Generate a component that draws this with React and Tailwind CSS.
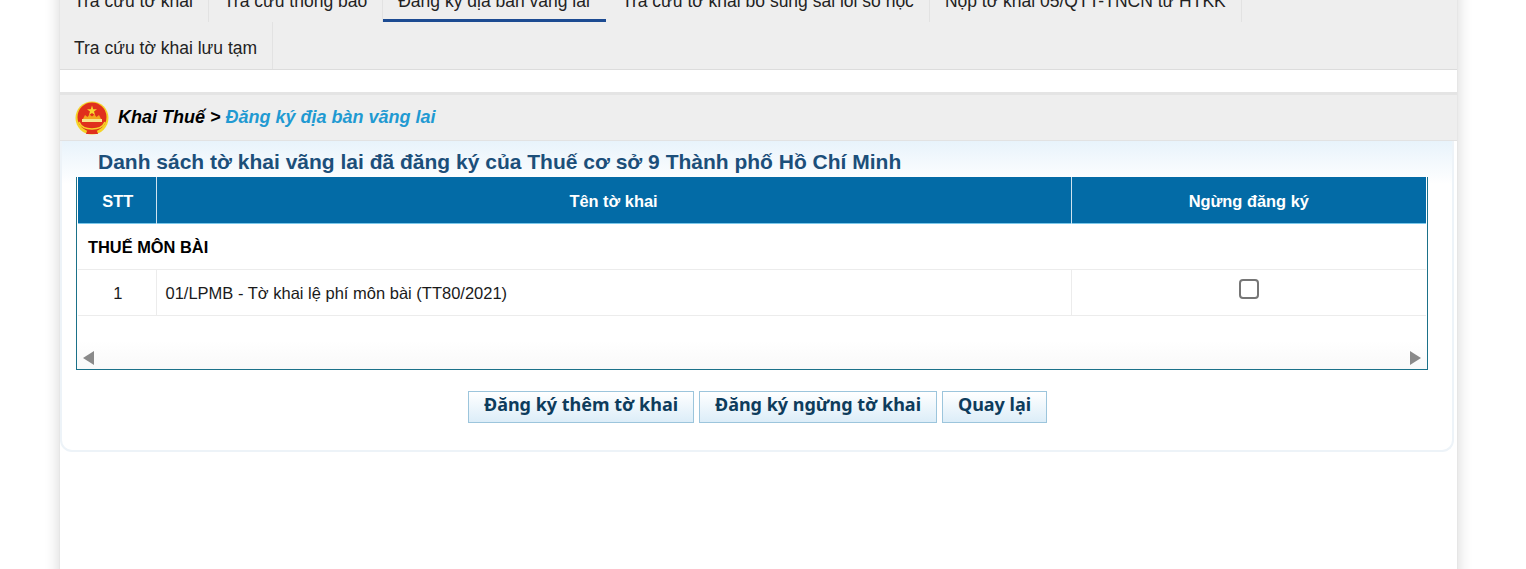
const arial = { fontFamily: '"Liberation Sans", Arial, sans-serif' };

function Emblem() {
  return (
    <svg width="34" height="34" viewBox="0 0 34 34" className="shrink-0">
      <circle cx="17" cy="17" r="16.5" fill="#f5d327" />
      <circle cx="17" cy="16" r="14.5" fill="#e0301c" />
      <polygon points="17,4.5 18.2,8.2 22,8.2 19,10.5 20.1,14.2 17,11.9 13.9,14.2 15,10.5 12,8.2 15.8,8.2" fill="#f7d62e" />
      <path d="M8 18l2-4 2.5 2 2-2.5 2.5 2 2.5-2 2 2.5 2.5-2 2 4z" fill="#f3a61e" />
      <rect x="7" y="18" width="20" height="3" fill="#f8e58a" />
      <path d="M11 33c1-4 3-7 6-7s5 3 6 7z" fill="#e0301c" />
      <path d="M4 21c2 5 7 7 13 7s11-2 13-7" stroke="#f5d327" strokeWidth="1.6" fill="none" />
    </svg>
  );
}

function Tab({ children, active }) {
  return (
    <div className={`relative h-[47px] flex items-center whitespace-nowrap text-[17.5px] text-[#222] ${active ? "pt-[9px] pl-[15px] pr-[16px] mr-[1px] border-b-[3px] border-[#1c4b92]" : "pt-[6px] px-[15px] border-r border-[#e2e2e2]"}`}>
      {children}
    </div>
  );
}

function Btn({ children, w }) {
  return (
    <button
      className={`${w} h-[32px] border border-[#9cc5dc] bg-gradient-to-b from-white to-[#dcedf8] text-[#0e3c5c] text-[18px] font-bold flex items-center justify-center pb-[5px]`}
      style={{ fontFamily: '"Noto Sans", sans-serif' }}
    >
      {children}
    </button>
  );
}

export default function App() {
  return (
    <div className="h-[569px] w-full overflow-hidden bg-white" style={arial}>
      <div className="ml-[59px] w-[1399px] h-[640px] -mt-[25px] bg-white shadow-[0_0_14px_rgba(0,0,0,0.16)] border-l border-r border-[#e6e6e6]">
        <div className="bg-[#eeeeee] border-b border-[#dcdcdc] h-[95px]">
          <div className="flex -ml-px">
            <Tab>Tra cứu tờ khai</Tab>
            <Tab>Tra cứu thông báo</Tab>
            <Tab active>Đăng ký địa bàn vãng lai</Tab>
            <Tab>Tra cứu tờ khai bổ sung sai lỗi số học</Tab>
            <Tab>Nộp tờ khai 05/QTT-TNCN từ HTKK</Tab>
          </div>
          <div className="flex -ml-px">
            <Tab>Tra cứu tờ khai lưu tạm</Tab>
          </div>
        </div>

        <div className="h-[22px] bg-white" />
        <div className="h-[3px] bg-[#e4e4e4]" />

        <div className="h-[46px] bg-[#eeeeee] border-b border-[#e2e2e2] flex items-center pl-[15px] gap-[9px] text-[18px] font-bold italic">
          <Emblem />
          <div className="whitespace-nowrap">
            <span className="text-black">Khai Thuế &gt; </span>
            <span className="text-[#1f9ad2]">Đăng ký địa bàn vãng lai</span>
          </div>
        </div>

        <div className="mr-[3px] h-[311px] border-x-2 border-b-2 border-[#edf3f8] rounded-b-[12px] bg-gradient-to-b from-[#e8f3fb] to-white to-[14%] px-[14px]">
          <h1 className="pt-[8px] h-[36px] pl-[22px] text-[21px] leading-[26px] font-bold text-[#1c4f7a] whitespace-nowrap">
            Danh sách tờ khai vãng lai đã đăng ký của Thuế cơ sở 9 Thành phố Hồ Chí Minh
          </h1>

          <div className="w-[1352px] h-[193px] border border-t-0 border-[#1b7189] bg-gradient-to-b from-white from-[85%] to-[#f9f9f9] flex flex-col">
            <table className="ml-px w-[1348px] table-fixed border-collapse text-[16.5px]">
              <colgroup>
                <col className="w-[78px]" />
                <col className="w-[915px]" />
                <col />
              </colgroup>
              <thead>
                <tr className="h-[46px] bg-[#036ba6] text-white font-bold border-b border-[#7cc8ea] text-[16.4px]">
                  <th className="border-r border-[#cfe3ef] pt-[3px] pl-[2px]">STT</th>
                  <th className="border-r border-[#cfe3ef] pt-[3px]">Tên tờ khai</th>
                  <th className="pt-[3px]">Ngừng đăng ký</th>
                </tr>
              </thead>
              <tbody className="text-[#1a1a1a]">
                <tr className="h-[46px] border-b border-[#ececec]">
                  <td colSpan={3} className="pl-[10px] pt-[2px] font-bold text-[16.4px] text-black">THUẾ MÔN BÀI</td>
                </tr>
                <tr className="h-[46px] border-b border-[#ececec]">
                  <td className="text-center border-r border-[#ececec] pt-[3px] pl-[2px]">1</td>
                  <td className="pl-[9px] border-r border-[#ececec] pt-[3px]">01/LPMB - Tờ khai lệ phí môn bài (TT80/2021)</td>
                  <td className="text-center">
                    <span className="inline-block relative -top-[4px] w-[20px] h-[20px] border-2 border-[#767676] rounded-[4px] bg-white align-middle" />
                  </td>
                </tr>
              </tbody>
            </table>
            <div className="mt-auto mb-[3px] px-[5px] flex justify-between">
              <svg width="13" height="16" viewBox="0 0 13 16"><polygon points="12,1 12,15 1,8" fill="#8a8a8a" /></svg>
              <svg width="13" height="16" viewBox="0 0 13 16"><polygon points="1,1 1,15 12,8" fill="#8a8a8a" /></svg>
            </div>
          </div>

          <div className="mt-[21px] flex justify-center gap-[5px] pr-[1px] pl-[2px]">
            <Btn w="w-[226px]">Đăng ký thêm tờ khai</Btn>
            <Btn w="w-[238px]">Đăng ký ngừng tờ khai</Btn>
            <Btn w="w-[105px]">Quay lại</Btn>
          </div>
        </div>
      </div>
    </div>
  );
}
